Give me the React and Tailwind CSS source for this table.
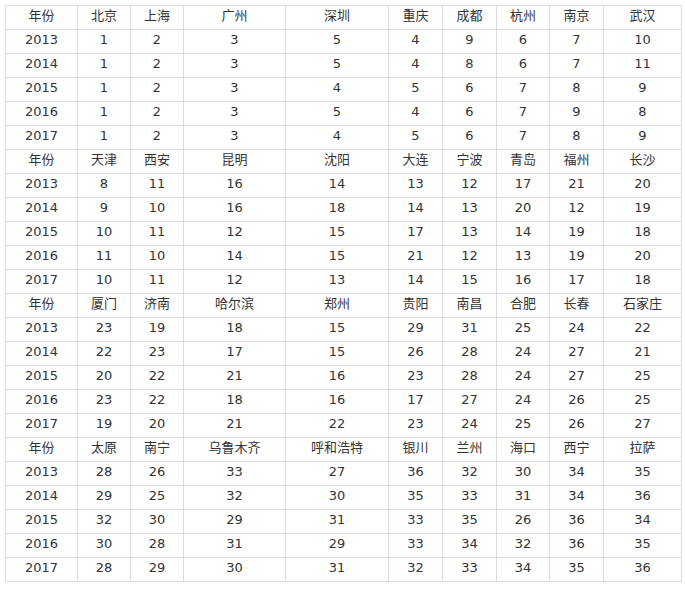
import React from 'react';

const widths = [72, 53, 53, 102, 103, 54, 54, 53, 54, 78];

const blocks = [
  {
    cities: ['北京', '上海', '广州', '深圳', '重庆', '成都', '杭州', '南京', '武汉'],
    rows: [
      ['2013', 1, 2, 3, 5, 4, 9, 6, 7, 10],
      ['2014', 1, 2, 3, 5, 4, 8, 6, 7, 11],
      ['2015', 1, 2, 3, 4, 5, 6, 7, 8, 9],
      ['2016', 1, 2, 3, 5, 4, 6, 7, 9, 8],
      ['2017', 1, 2, 3, 4, 5, 6, 7, 8, 9],
    ],
  },
  {
    cities: ['天津', '西安', '昆明', '沈阳', '大连', '宁波', '青岛', '福州', '长沙'],
    rows: [
      ['2013', 8, 11, 16, 14, 13, 12, 17, 21, 20],
      ['2014', 9, 10, 16, 18, 14, 13, 20, 12, 19],
      ['2015', 10, 11, 12, 15, 17, 13, 14, 19, 18],
      ['2016', 11, 10, 14, 15, 21, 12, 13, 19, 20],
      ['2017', 10, 11, 12, 13, 14, 15, 16, 17, 18],
    ],
  },
  {
    cities: ['厦门', '济南', '哈尔滨', '郑州', '贵阳', '南昌', '合肥', '长春', '石家庄'],
    rows: [
      ['2013', 23, 19, 18, 15, 29, 31, 25, 24, 22],
      ['2014', 22, 23, 17, 15, 26, 28, 24, 27, 21],
      ['2015', 20, 22, 21, 16, 23, 28, 24, 27, 25],
      ['2016', 23, 22, 18, 16, 17, 27, 24, 26, 25],
      ['2017', 19, 20, 21, 22, 23, 24, 25, 26, 27],
    ],
  },
  {
    cities: ['太原', '南宁', '乌鲁木齐', '呼和浩特', '银川', '兰州', '海口', '西宁', '拉萨'],
    rows: [
      ['2013', 28, 26, 33, 27, 36, 32, 30, 34, 35],
      ['2014', 29, 25, 32, 30, 35, 33, 31, 34, 36],
      ['2015', 32, 30, 29, 31, 33, 35, 26, 36, 34],
      ['2016', 30, 28, 31, 29, 33, 34, 32, 36, 35],
      ['2017', 28, 29, 30, 31, 32, 33, 34, 35, 36],
    ],
  },
];

const cellCls =
  'h-[24px] p-0 pb-[3px] border border-[#dddddd] text-center align-middle leading-[20px]';

export default function App() {
  return (
    <div className="bg-white w-[685px] h-[589px] pt-[5px] pl-[5px]">
      <table className="table-fixed border-collapse text-[#333333] text-[13px] font-['DejaVu_Sans','Noto_Sans_CJK_SC',sans-serif]">
        <colgroup>
          {widths.map((w, i) => (
            <col key={i} style={{ width: w }} />
          ))}
        </colgroup>
        <tbody>
          {blocks.map((block, b) => (
            <React.Fragment key={b}>
              <tr>
                <td className={cellCls}>年份</td>
                {block.cities.map((c) => (
                  <td key={c} className={cellCls}>
                    {c}
                  </td>
                ))}
              </tr>
              {block.rows.map((row) => (
                <tr key={row[0]}>
                  {row.map((v, i) => (
                    <td key={i} className={cellCls}>
                      {v}
                    </td>
                  ))}
                </tr>
              ))}
            </React.Fragment>
          ))}
        </tbody>
      </table>
    </div>
  );
}
